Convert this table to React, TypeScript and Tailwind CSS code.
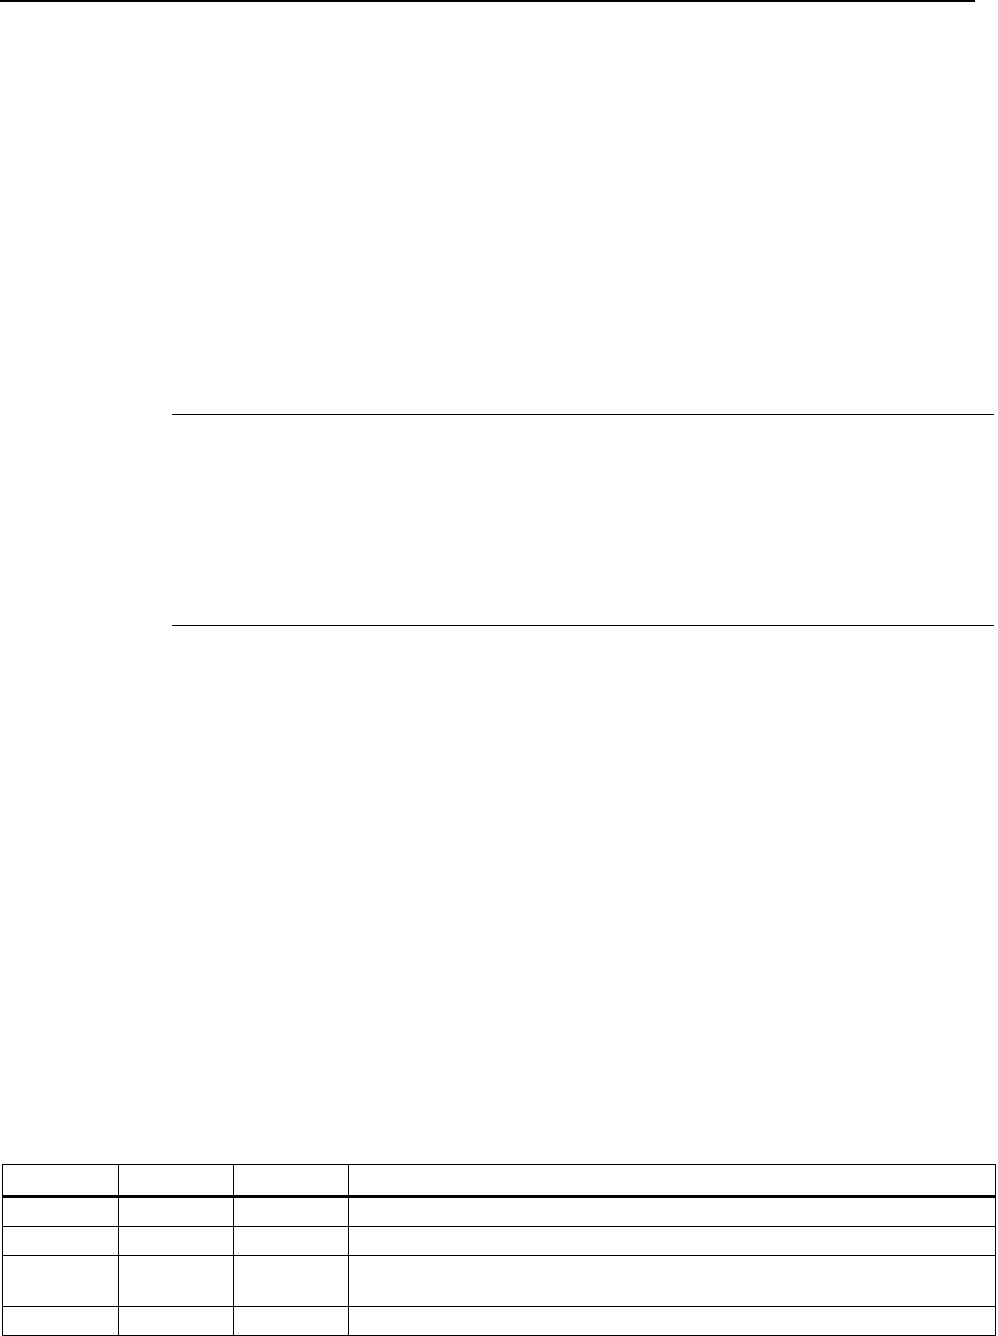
export default function App() {
  const rows = [28, 28, 50, 28];
  const Cells = ({ h, last }: { h: number; last?: boolean }) => (
    <div className={`flex ${last ? "" : "border-b border-black"}`} style={{ height: h + (last ? 0 : 1) }}>
      <div className="w-[115px]" />
      <div className="w-[115px] border-l border-black" />
      <div className="w-[115px] border-l border-black" />
      <div className="flex-1 border-l border-black" />
    </div>
  );
  return (
    <div className="w-[998px] h-[1336px] bg-white flex flex-col" style={{ fontFamily: "'Liberation Sans', Arial, sans-serif" }}>
      <div className="h-[2px] w-[975px] bg-black shrink-0" />
      <div className="mt-[412px] ml-[172px] w-[822px] h-px bg-black shrink-0" />
      <div className="mt-[210px] ml-[172px] w-[822px] h-px bg-black shrink-0" />
      <div className="mt-[538px] ml-[2px] w-[994px] border border-black shrink-0">
        <div className="flex h-[33px] border-b-[3px] border-black">
          <div className="w-[115px]" />
          <div className="w-[115px] border-l border-black" />
          <div className="w-[115px] border-l border-black" />
          <div className="flex-1 border-l border-black" />
        </div>
        {rows.map((h, i) => (
          <Cells key={i} h={h} last={i === rows.length - 1} />
        ))}
      </div>
    </div>
  );
}
